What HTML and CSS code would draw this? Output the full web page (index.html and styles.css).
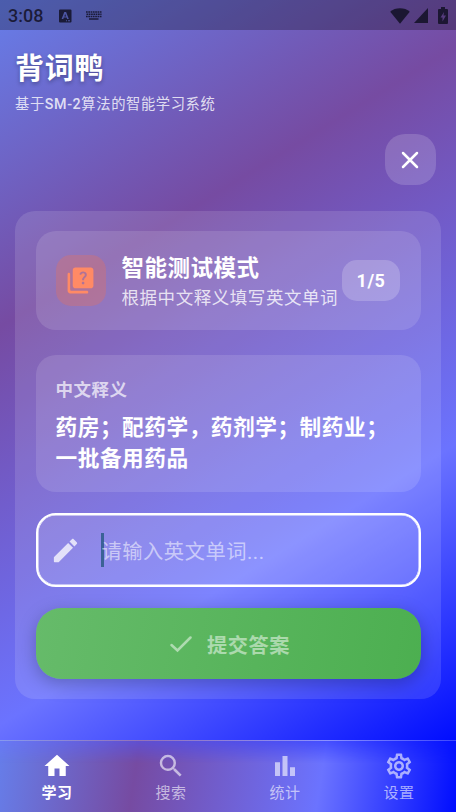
FILE: index.html
```html
<!DOCTYPE html>
<html lang="zh-CN">
<head>
<meta charset="utf-8">
<title>背词鸭</title>
<link rel="stylesheet" href="styles.css">
</head>
<body>
<div class="screen">
  <main class="page">
    <div class="status">
      <span class="time">3:08</span>
      <svg class="ime" width="13" height="14" viewBox="0 0 13 14"><path fill="currentColor" fill-rule="evenodd" d="M1 .5h10.500a1 1 0 0 1 1 1v11a1 1 0 0 1-1 1H1a1 1 0 0 1-1-1v-11a1 1 0 0 1 1-1zM5.300 3 2.600 10h1.700l.5-1.400h2.800l.5 1.400h1.700L7.100 3zm.9 1.900.9 2.500H5.300zM7 11.300v1h1v-1zm2 0v1h2v-1z"/></svg>
      <svg class="keys" width="16" height="9" viewBox="0 0 16 9"><g stroke="currentColor" stroke-width="1.500"><path stroke-dasharray="1.700 .6" d="M0 1h16M.5 3.300h15M0 5.600h16"/><path d="M3 8h9.500"/></g></svg>
      <span class="grow"></span>
      <svg class="wifi" width="20" height="16" viewBox="0 0 20 16"><path fill="currentColor" d="M10 15.700.2 3.700C5-.9 15-.9 19.800 3.700z"/></svg>
      <svg class="signal" width="14" height="15" viewBox="0 0 14 15"><path fill="currentColor" d="M14 0v15H0z"/></svg>
      <svg class="battery" width="10" height="17" viewBox="0 0 10 17"><path fill="currentColor" fill-rule="evenodd" d="M3 0h4v2h2q1 0 1 1v13q0 1-1 1H1q-1 0-1-1V3q0-1 1-1h2zM6 5 2.500 10.500h2v4L8 8.500H5.500z"/></svg>
    </div>
    <header class="head">
      <h1>背词鸭</h1>
      <p>基于<b>SM-2</b>算法的智能学习系统</p>
    </header>
    <div class="close-row">
      <button class="close"><svg width="19" height="18" viewBox="0 0 19 18"><path d="m2 2 14 14M16 2 2 16" stroke="#fff" stroke-width="2.500" stroke-linecap="round"/></svg></button>
    </div>
    <section class="panel">
      <div class="mode">
        <div class="badge"><svg width="31" height="31" viewBox="0 0 24 24"><path fill="#ff8a65" d="M3 6c-.55 0-1 .45-1 1v13c0 1.100.9 2 2 2h13c.55 0 1-.45 1-1s-.45-1-1-1H5c-.55 0-1-.45-1-1V7c0-.55-.45-1-1-1zm17-4H8c-1.100 0-2 .9-2 2v12c0 1.100.9 2 2 2h12c1.100 0 2-.9 2-2V4c0-1.100-.9-2-2-2zm-5.990 13c-.59 0-1.050-.47-1.050-1.050 0-.59.47-1.040 1.050-1.040.59 0 1.040.45 1.040 1.040-.01.58-.45 1.050-1.040 1.050zm2.500-6.170c-.63.93-1.230 1.210-1.560 1.810-.13.24-.18.4-.18 1.180h-1.520c0-.41-.06-1.080.26-1.650.41-.73 1.180-1.160 1.630-1.800.48-.68.21-1.940-1.140-1.940-.88 0-1.320.67-1.500 1.230l-1.370-.57C11.510 5.960 12.520 5 13.990 5c1.230 0 2.080.56 2.510 1.260.37.61.58 1.730.01 2.570z"/></svg></div>
        <div class="mode-text">
          <h2>智能测试模式</h2>
          <p>根据中文释义填写英文单词</p>
        </div>
        <span class="count">1/5</span>
      </div>
      <div class="meaning">
        <h3>中文释义</h3>
        <p>药房；配药学，药剂学；制药业；一批备用药品</p>
      </div>
      <div class="field">
        <svg width="31" height="31" viewBox="0 0 24 24"><path fill="currentColor" d="M3 17.460v3.040c0 .28.22.5.5.5h3.040c.13 0 .26-.05.35-.15L17.810 9.940l-3.750-3.750L3.150 17.100c-.1.100-.15.220-.15.360zM20.710 7.040c.39-.39.39-1.020 0-1.410l-2.340-2.340c-.39-.39-1.020-.39-1.410 0l-1.830 1.830 3.750 3.750 1.830-1.830z"/></svg>
        <span class="caret"></span>
        <span class="hint">请输入英文单词...</span>
      </div>
      <button class="submit">
        <svg width="22" height="18" viewBox="0 0 22 18"><path d="m1.500 10 6 5.500L20.500 2.500" fill="none" stroke="currentColor" stroke-width="2.500" stroke-linecap="round"/></svg>
        <span>提交答案</span>
      </button>
    </section>
  </main>
  <nav class="tabs">
    <a class="tab active"><svg viewBox="0 0 24 24"><path fill="currentColor" d="M10 20v-6h4v6h5v-8h3L12 3 2 12h3v8z"/></svg><span>学习</span></a>
    <a class="tab"><svg viewBox="0 0 24 24"><path fill="currentColor" d="M15.500 14h-.79l-.28-.27A6.471 6.471 0 0 0 16 9.500 6.500 6.500 0 1 0 9.500 16c1.610 0 3.090-.59 4.230-1.570l.27.28v.79l5 4.990L20.490 19l-4.990-5zm-6 0C7.010 14 5 11.990 5 9.500S7.010 5 9.500 5 14 7.010 14 9.500 11.990 14 9.500 14z"/></svg><span>搜索</span></a>
    <a class="tab"><svg viewBox="0 0 24 24"><path fill="currentColor" d="M4 9h4v11H4zm12 4h4v7h-4zm-6-9h4v16h-4z"/></svg><span>统计</span></a>
    <a class="tab"><svg viewBox="0 0 24 24"><path fill="currentColor" d="M19.430 12.980c.04-.32.07-.64.07-.98s-.03-.66-.07-.98l2.110-1.650c.19-.15.24-.42.12-.64l-2-3.460c-.09-.16-.26-.25-.44-.25-.06 0-.12.010-.17.030l-2.490 1c-.52-.4-1.080-.73-1.690-.98l-.38-2.650C14.460 2.180 14.250 2 14 2h-4c-.25 0-.46.18-.49.42l-.38 2.650c-.61.25-1.170.59-1.690.98l-2.490-1c-.06-.02-.12-.03-.18-.03-.17 0-.34.090-.43.25l-2 3.460c-.13.22-.07.49.12.64l2.110 1.650c-.04.32-.07.65-.07.98s.03.66.07.98l-2.110 1.650c-.19.15-.24.42-.12.64l2 3.460c.09.16.26.25.44.25.06 0 .12-.01.17-.03l2.490-1c.52.4 1.080.73 1.690.98l.38 2.650c.03.24.24.42.49.42h4c.25 0 .46-.18.49-.42l.38-2.650c.61-.25 1.170-.59 1.690-.98l2.490 1c.06.020.12.030.18.030.17 0 .34-.09.43-.25l2-3.460c.12-.22.07-.49-.12-.64l-2.110-1.650zm-1.980-1.710c.04.31.050.52.050.73s-.02.43-.05.73l-.14 1.130.89.7 1.080.84-.7 1.210-1.270-.51-1.040-.42-.9.68c-.43.32-.84.56-1.250.73l-1.060.43-.16 1.130-.2 1.350h-1.400l-.19-1.350-.16-1.130-1.060-.43c-.43-.18-.83-.41-1.230-.71l-.91-.7-1.060.43-1.270.51-.7-1.210 1.080-.84.89-.7-.14-1.130c-.03-.31-.05-.54-.05-.74s.02-.43.050-.73l.14-1.130-.89-.7-1.080-.84.7-1.210 1.270.51 1.040.42.9-.68c.43-.32.84-.56 1.250-.73l1.060-.43.16-1.130.2-1.350h1.390l.19 1.350.16 1.130 1.060.43c.43.18.83.41 1.230.71l.91.7 1.060-.43 1.270-.51.7 1.210-1.070.85-.89.7.14 1.130zM12 8c-2.210 0-4 1.790-4 4s1.790 4 4 4 4-1.790 4-4-1.790-4-4-4zm0 6c-1.100 0-2-.9-2-2s.9-2 2-2 2 .9 2 2-.9 2-2 2z"/></svg><span>设置</span></a>
  </nav>
</div>
</body>
</html>
```
FILE: styles.css
```css
* { box-sizing: border-box; margin: 0; }
body { font-family: Roboto, "Noto Sans CJK SC", sans-serif; color: #fff; }
button { border: 0; color: inherit; font: inherit; }
svg { display: block; flex: none; }

.screen { width: 456px; height: 812px; display: flex; flex-direction: column; overflow: hidden; }
.page {
  height: 740px;
  background: linear-gradient(148.36deg, #667eea 0%, #764ba2 32%, #6b73ff 71%, #000dff 100%);
}

.status {
  height: 30px; padding: 1px 8px 0; display: flex; align-items: center;
  background: rgba(0, 0, 0, .26); color: rgba(18, 16, 36, .85);
}
.time { font-size: 18px; font-weight: 500; width: 51px; }
.keys { margin-left: 14px; }
.grow { flex: 1; }
.signal { margin-left: 4px; }
.battery { margin-left: 10px; }

.head { height: 104px; padding: 18px 15px 0; }
.head h1 {
  font-size: 29px; line-height: 42px; font-weight: 700; letter-spacing: .8px;
  text-shadow: 0 2px 4px rgba(0, 0, 0, .3);
}
.head p { margin-top: 4px; font-size: 14.300px; line-height: 20px; letter-spacing: .6px; color: rgba(255, 255, 255, .8); }
.head b { font-weight: 500; }

.close-row { height: 77px; display: flex; justify-content: flex-end; padding-right: 20px; }
.close {
  width: 51px; height: 51px; padding: 0; display: grid; place-items: center;
  border-radius: 20px; background: rgba(255, 255, 255, .16);
}

.panel {
  margin: 0 15px; height: 488px; padding: 20px 20.500px;
  border-radius: 20px; background: rgba(255, 255, 255, .12);
}
.mode {
  height: 99px; padding: 0 20px; display: flex; align-items: center;
  border-radius: 20px; background: rgba(255, 255, 255, .12);
}
.badge {
  width: 50.500px; height: 51px; display: grid; place-items: center; flex: none;
  border-radius: 15px; background: rgba(255, 112, 67, .26);
}
.mode-text { width: 220px; margin-left: 15.500px; padding-top: 3px; white-space: nowrap; }
.mode-text h2 { font-size: 22.500px; line-height: 31px; letter-spacing: .5px; font-weight: 700; }
.mode-text p { font-size: 17.500px; line-height: 28px; letter-spacing: .55px; color: rgba(255, 255, 255, .8); }
.count {
  width: 58px; height: 41px; line-height: 41px; text-align: center; flex: none; padding-left: 1px;
  border-radius: 15px; background: rgba(255, 255, 255, .2);
  font-size: 18px; font-weight: 700; letter-spacing: .5px;
}

.meaning {
  margin-top: 25px; height: 137px; padding: 21px 20px 0;
  border-radius: 20px; background: rgba(255, 255, 255, .12);
}
.meaning h3 { font-size: 17.500px; line-height: 28px; letter-spacing: .5px; font-weight: 700; color: rgba(255, 255, 255, .7); }
.meaning p { margin-top: 8px; font-size: 21.700px; line-height: 31px; letter-spacing: .5px; font-weight: 700; }

.field {
  margin-top: 21px; height: 74px; padding: 0 12px; display: flex; align-items: center;
  border: 2px solid #fff; border-radius: 20px; background: rgba(255, 255, 255, .12);
  box-shadow: inset 0 0 0 .5px #fff;
}
.field svg { color: rgba(255, 255, 255, .75); }
.caret { width: 3px; height: 34px; margin-left: 20px; background: #3b6296; }
.hint { margin-left: -2px; font-size: 20.300px; letter-spacing: .5px; color: rgba(255, 255, 255, .55); }

.submit {
  margin-top: 21px; width: 100%; height: 71px; padding: 0 0 0 4px; display: flex; align-items: center; justify-content: center;
  gap: 15px; border-radius: 25px; background: linear-gradient(100deg, #66bb6a, #4caf50);
  box-shadow: 0 5px 18px rgba(0, 0, 0, .25);
  font-size: 20.200px; font-weight: 700; letter-spacing: .5px; color: rgba(255, 255, 255, .5);
}
.submit span { padding-top: 1px; }

.tabs {
  position: relative; height: 72px; display: flex; border-top: 1px solid rgba(255, 255, 255, .22);
  background: linear-gradient(98.970deg, #667eea 0%, #764ba2 30%, #6b73ff 70%, #000dff 100%) border-box;
}
.tabs::before {
  content: ""; position: absolute; inset: 0 0 auto; height: 22px;
  background: linear-gradient(90deg, #6b73ff 0%, #000dff 100%);
  -webkit-mask-image: linear-gradient(rgba(0, 0, 0, .5), transparent);
  mask-image: linear-gradient(rgba(0, 0, 0, .5), transparent);
}
.tab {
  position: relative; flex: 1; padding-top: 10px; display: flex; flex-direction: column; align-items: center;
  color: rgba(255, 255, 255, .6);
}
.tab svg { width: 30px; height: 30px; }
.tab span { font-size: 15px; line-height: 22px; letter-spacing: .4px; margin-top: 1px; }
.active { color: #fff; }
.active span { font-weight: 700; }
```
